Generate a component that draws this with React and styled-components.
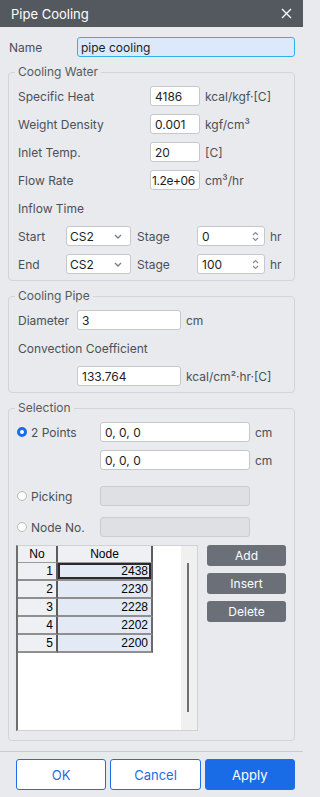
import React from "react";
import styled, { createGlobalStyle } from "styled-components";

const GlobalStyle = createGlobalStyle`
  html, body {
    margin: 0;
    padding: 0;
    background: #e9eaed;
  }
  body {
    font-family: Inter, "Liberation Sans", sans-serif;
    font-size: 12px;
    color: #4b5058;
  }
  * { box-sizing: border-box; }
`;

const nodes = [2438, 2230, 2228, 2202, 2200];

const CloseIcon = () => (
  <svg width="11" height="11" viewBox="0 0 11 11">
    <path d="M1 1 L10 10 M10 1 L1 10" stroke="#fff" strokeWidth="1.3" fill="none" />
  </svg>
);

const Chevron = () => (
  <svg width="8" height="5" viewBox="0 0 8 5">
    <path d="M1 1 L4 4 L7 1" stroke="#7a7e85" strokeWidth="1.4" fill="none" />
  </svg>
);

const SpinArrows = () => (
  <SpinCol>
    <svg width="7" height="5" viewBox="0 0 7 5">
      <path d="M1 4 L3.5 1.5 L6 4" stroke="#8a8d93" strokeWidth="1.2" fill="none" />
    </svg>
    <svg width="7" height="5" viewBox="0 0 7 5">
      <path d="M1 1 L3.5 3.5 L6 1" stroke="#8a8d93" strokeWidth="1.2" fill="none" />
    </svg>
  </SpinCol>
);

const App = () => {
  return (
    <>
      <GlobalStyle />
      <Dialog>
        <TitleBar>
          <span>Pipe Cooling</span>
          <CloseIcon />
        </TitleBar>
        <Body>
          <NameRow>
            <Label width={68}>Name</Label>
            <NameInput defaultValue="pipe cooling" />
          </NameRow>

          <Group>
            <Legend>Cooling Water</Legend>
            <Row top={6}>
              <Label width={132}>Specific Heat</Label>
              <TextBox width={50} defaultValue="4186" />
              <Unit>kcal/kgf·[C]</Unit>
            </Row>
            <Row top={8}>
              <Label width={132}>Weight Density</Label>
              <TextBox width={50} defaultValue="0.001" />
              <Unit>kgf/cm³</Unit>
            </Row>
            <Row top={8}>
              <Label width={132}>Inlet Temp.</Label>
              <TextBox width={50} defaultValue="20" />
              <Unit>[C]</Unit>
            </Row>
            <Row top={8}>
              <Label width={132}>Flow Rate</Label>
              <TextBox width={50} defaultValue="1.2e+06" tight />
              <Unit>cm³/hr</Unit>
            </Row>
            <Row top={8}>
              <Label>Inflow Time</Label>
            </Row>
            <Row top={8}>
              <Label width={48}>Start</Label>
              <Select>
                <span>CS2</span>
                <Chevron />
              </Select>
              <Label width={66} pad={6}>Stage</Label>
              <Spinner>
                <span>0</span>
                <SpinArrows />
              </Spinner>
              <Unit>hr</Unit>
            </Row>
            <Row top={8}>
              <Label width={48}>End</Label>
              <Select>
                <span>CS2</span>
                <Chevron />
              </Select>
              <Label width={66} pad={6}>Stage</Label>
              <Spinner>
                <span>100</span>
                <SpinArrows />
              </Spinner>
              <Unit>hr</Unit>
            </Row>
          </Group>

          <Group>
            <Legend>Cooling Pipe</Legend>
            <Row top={6}>
              <Label width={59}>Diameter</Label>
              <TextBox width={104} defaultValue="3" />
              <Unit>cm</Unit>
            </Row>
            <Row top={8}>
              <Label>Convection Coefficient</Label>
            </Row>
            <Row top={8}>
              <Label width={59} />
              <TextBox width={104} defaultValue="133.764" />
              <Unit>kcal/cm²·hr·[C]</Unit>
            </Row>
          </Group>

          <Group bottom={9}>
            <Legend>Selection</Legend>
            <Row top={6}>
              <RadioLabel>
                <Radio checked />
                2 Points
              </RadioLabel>
              <TextBox width={150} defaultValue="0, 0, 0" />
              <Unit>cm</Unit>
            </Row>
            <Row top={8}>
              <RadioLabel />
              <TextBox width={150} defaultValue="0, 0, 0" />
              <Unit>cm</Unit>
            </Row>
            <Row top={16}>
              <RadioLabel>
                <Radio />
                Picking
              </RadioLabel>
              <TextBox width={150} disabled />
            </Row>
            <Row top={11}>
              <RadioLabel>
                <Radio />
                Node No.
              </RadioLabel>
              <TextBox width={150} disabled />
            </Row>

            <ListArea>
              <ListBox>
                <Grid>
                  <thead>
                    <tr>
                      <HeadCell width={40}>No</HeadCell>
                      <HeadCell width={95}>Node</HeadCell>
                    </tr>
                  </thead>
                  <tbody>
                    {nodes.map((n, i) => (
                      <tr key={n}>
                        <NoCell>{i + 1}</NoCell>
                        <NodeCell focused={i === 0}>{n}</NodeCell>
                      </tr>
                    ))}
                  </tbody>
                </Grid>
                <ScrollTrack>
                  <ScrollThumb />
                </ScrollTrack>
              </ListBox>
              <SideButtons>
                <SideButton>Add</SideButton>
                <SideButton>Insert</SideButton>
                <SideButton>Delete</SideButton>
              </SideButtons>
            </ListArea>
          </Group>
        </Body>

        <Footer>
          <FooterButton>OK</FooterButton>
          <FooterButton>Cancel</FooterButton>
          <FooterButton primary>Apply</FooterButton>
        </Footer>
      </Dialog>
    </>
  );
};

export default App;

const Dialog = styled.div`
  width: 303px;
  height: 797px;
  display: flex;
  flex-direction: column;
  background: #e9eaed;
`;

const TitleBar = styled.div`
  height: 27px;
  flex: none;
  display: flex;
  align-items: center;
  justify-content: space-between;
  padding: 0 11px 0 11px;
  background: #545960;
  color: #ffffff;
  font-size: 13px;
`;

const Body = styled.div`
  padding: 0 8px;
  display: flex;
  flex-direction: column;
`;

const NameRow = styled.div`
  margin-top: 10px;
  height: 20px;
  display: flex;
  align-items: center;
  padding-left: 1px;
`;

const NameInput = styled.input`
  width: 219px;
  height: 20px;
  border: 1px solid #2fb4e9;
  border-radius: 3px;
  background: #dce9fb;
  font-family: Inter, "Liberation Sans", sans-serif;
  font-size: 12px;
  color: #1e1e1e;
  padding: 0 3px;
  outline: none;
`;

const Group = styled.fieldset`
  margin: 7px 0 0;
  min-width: 0;
  border: 1px solid #d3d4d8;
  border-radius: 4px;
  padding: 0 8px ${(p) => p.bottom ?? 6}px 9px;
`;

const Legend = styled.legend`
  margin-left: -3px;
  padding: 0 3px;
  line-height: 16px;
  font-size: 12px;
  color: #565a61;
`;

const Row = styled.div`
  display: flex;
  align-items: center;
  height: 20px;
  margin-top: ${(p) => p.top || 0}px;
`;

const Label = styled.span`
  flex: none;
  width: ${(p) => (p.width ? `${p.width}px` : "auto")};
  padding-left: ${(p) => p.pad || 0}px;
  white-space: nowrap;
`;

const TextBox = styled.input`
  flex: none;
  width: ${(p) => p.width}px;
  height: 20px;
  border: 1px solid ${(p) => (p.disabled ? "#cbccd0" : "#c6c7cb")};
  border-radius: 3px;
  background: ${(p) => (p.disabled ? "#dfe0e3" : "#ffffff")};
  font-family: Inter, "Liberation Sans", sans-serif;
  font-size: 12px;
  letter-spacing: ${(p) => (p.tight ? "-0.4px" : "0")};
  color: #1e1e1e;
  padding: 0 ${(p) => (p.tight ? 1 : 4)}px;
  outline: none;
`;

const Unit = styled.span`
  margin-left: 5px;
  white-space: nowrap;
`;

const Select = styled.div`
  flex: none;
  width: 65px;
  height: 20px;
  display: flex;
  align-items: center;
  justify-content: space-between;
  padding: 0 8px 0 3px;
  background: #ffffff;
  border: 1px solid #c6c7cb;
  border-radius: 3px;
  color: #1e1e1e;
`;

const Spinner = styled.div`
  flex: none;
  width: 68px;
  height: 20px;
  display: flex;
  align-items: center;
  justify-content: space-between;
  padding: 0 5px 0 4px;
  background: #ffffff;
  border: 1px solid #c6c7cb;
  border-radius: 3px;
  color: #1e1e1e;
`;

const SpinCol = styled.div`
  display: flex;
  flex-direction: column;
  gap: 1px;
`;

const RadioLabel = styled.label`
  flex: none;
  width: 83px;
  margin-left: -1px;
  display: flex;
  align-items: center;
  gap: 4px;
  white-space: nowrap;
`;

const Radio = styled.span`
  width: 10px;
  height: 10px;
  border-radius: 50%;
  background: #ffffff;
  border: ${(p) => (p.checked ? "3px solid #1a6de8" : "1px solid #b8babe")};
`;

const ListArea = styled.div`
  margin-top: 8px;
  margin-left: -2px;
  display: flex;
  align-items: flex-start;
`;

const ListBox = styled.div`
  width: 183px;
  height: 186px;
  display: flex;
  background: #ffffff;
  border: 1px solid #d0d1d4;
  border-left: 2px solid #6e6e6e;
`;

const Grid = styled.table`
  align-self: flex-start;
  border-collapse: separate;
  border-spacing: 0;
  font-family: "Liberation Sans", Arial, sans-serif;
  font-size: 12px;
  color: #000000;
  margin-right: auto;
`;

const HeadCell = styled.th`
  width: ${(p) => p.width}px;
  height: 17px;
  padding: 0;
  font-weight: normal;
  background: #eef0f4;
  border-right: 2px solid #5c5c5c;
  border-bottom: 1px solid #9a9a9a;
  line-height: 16px;
`;

const NoCell = styled.td`
  height: 18px;
  padding: 0 3px 0 0;
  text-align: right;
  background: #eff0f3;
  border-right: 2px solid #5c5c5c;
  border-bottom: 2px solid #8f8f8f;
  line-height: 16px;
`;

const NodeCell = styled.td`
  height: 18px;
  padding: 0 3px 0 0;
  text-align: right;
  background: #e3eaf6;
  border-right: 2px solid #6a6a6a;
  border-bottom: 2px solid #8f8f8f;
  line-height: 16px;
  box-shadow: ${(p) => (p.focused ? "inset 0 0 0 2px #2a2a2a" : "none")};
`;

const ScrollTrack = styled.div`
  width: 16px;
  height: 100%;
  background: #f0f0f0;
  padding: 17px 0 18px 6px;
`;

const ScrollThumb = styled.div`
  width: 2px;
  height: 100%;
  background: #707070;
`;

const SideButtons = styled.div`
  margin-left: 9px;
  display: flex;
  flex-direction: column;
  gap: 7px;
`;

const SideButton = styled.button`
  width: 79px;
  height: 21px;
  border: none;
  border-radius: 3px;
  background: #6b7078;
  color: #ffffff;
  font-family: Inter, "Liberation Sans", sans-serif;
  font-size: 12px;
  padding: 0;
`;

const Footer = styled.div`
  margin-top: 10px;
  border-top: 1px solid #c9cacd;
  padding: 7px 8px 0 16px;
  display: grid;
  grid-template-columns: repeat(3, 1fr);
  gap: 4px;
`;

const FooterButton = styled.button`
  height: 31px;
  border-radius: 3px;
  border: 1px solid #1d6de7;
  background: ${(p) => (p.primary ? "#1a6be6" : "#ffffff")};
  color: ${(p) => (p.primary ? "#ffffff" : "#1d6de7")};
  font-family: Inter, "Liberation Sans", sans-serif;
  font-size: 13px;
  padding: 0;
`;
